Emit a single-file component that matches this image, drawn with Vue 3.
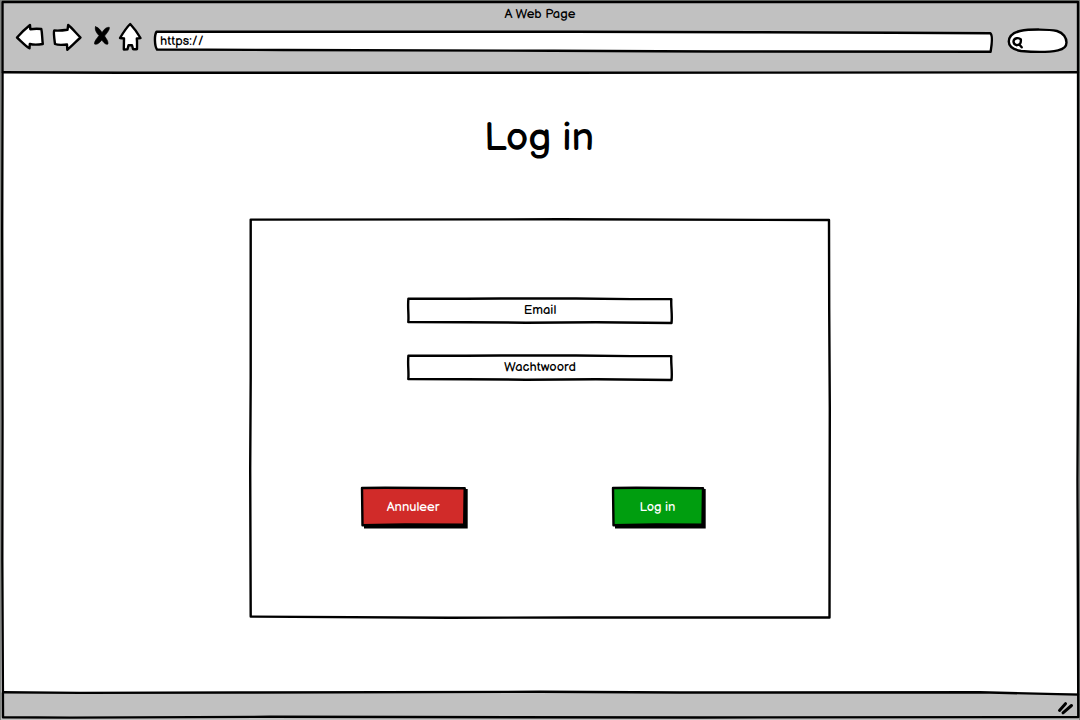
<script setup>
const fields = ['Email', 'Wachtwoord']
</script>

<template>
  <div class="browser">
    <header class="chrome">
      <div class="title"><span>A Web Page</span></div>
      <div class="toolbar">
        <nav class="nav">
          <svg width="142" height="34" viewBox="0 0 142 34" class="ink">
            <path d="M2 17.500C6 13 10 9 15 5L15.300 9.200C19 8.700 23 8.700 26.300 9C27.300 13 27 18 27.800 24C23 24.800 19 25 14.800 24L14.500 28.300C10 25.500 6 21 2 17.500Z" />
            <path d="M54.200 10.500C58 10.800 63 10.500 67.500 9.800L68.200 5C72 8 76 13 80.500 17.500C76 21.500 72 26 67.300 29.700L67 24.500C62 24.800 59 25.500 55 24C54.500 20 53.300 12 54.200 10.500Z" transform="translate(-15)" />
            <path class="solid" d="M80.500 6.800C83 7 85 9.500 87 12.500C89 9.500 91 7 94.300 7.300C95 9.500 92 13 89.600 16C91.300 19 93.500 21 93 24C91.200 25.300 88.500 22.500 86.800 20C84.500 23 82 25 79.500 24C79.200 21 82 18.500 84 15.500C82 13.500 79.300 10 80.500 6.800Z" />
            <path d="M115.200 4C119 8 122.500 13 125.500 18L121.800 18.500C122.300 22 122 25 122 29C120.500 29.500 119 29.300 118 29L117 25.300L113.500 25.300L112.500 29.300L108.800 29.500L109 18.500L105 18C108 13 111.500 7.500 115.200 4Z" />
          </svg>
        </nav>
        <div class="address">
          <svg class="sketch ink" viewBox="0 0 840 24">
            <path d="M3.500 3.700L420 3.700L600 4.200L740 4.800L837.300 5.300C839.600 7 839.400 13 837.600 23.700L560 23.500L400 22.800L130 22L4 21.500C1.500 18 1.200 7 3.500 3.700Z" />
          </svg>
          <span class="url">https://</span>
        </div>
        <div class="search">
          <svg width="64" height="30" viewBox="0 0 64 30" class="ink">
            <path d="M14 5C24 3 43 3.200 51 5C57.500 6.800 60.500 12 60.500 16.500C60.500 21 58 23 52 24.300C42 26.500 32 26.500 15 25C7 23.500 2.800 20 2.800 15.500C3 10 8 6.500 14 5Z" />
            <path class="bare" d="M7.500 15.500C7.800 11.500 13 11.500 14.800 13.300C15.300 17.500 13.500 19.200 10.500 19.200C8.500 18.500 7.500 17.500 7.500 15.500ZM13.500 18.800L15.700 21.300" />
          </svg>
        </div>
      </div>
    </header>

    <main class="page">
      <h1 class="heading">Log in</h1>
      <form class="panel" @submit.prevent>
        <svg class="sketch ink" viewBox="0 0 582 402">
          <path d="M1.700 1.600L310 1.300L580 2L580.200 90L580.800 190L580.500 399.500L330 399.500L200 399.700L1.700 398.600L1.200 250L1.700 160Z" />
        </svg>
        <div class="fields">
          <label v-for="label in fields" :key="label" class="field">
            <svg class="sketch ink" viewBox="0 0 268 28">
              <path d="M2.400 1.700L60 1.800L95 1.500L170 1.500L225 2.100L265.300 2.100C264.800 10 266.500 18 265.500 26L190 25.300L120 25.700L60 25.200L2.300 25C3 18 1.500 10 2.400 1.700Z" />
            </svg>
            <span>{{ label }}</span>
          </label>
        </div>
        <div class="actions">
          <button type="button" class="button cancel">
            <svg class="sketch" viewBox="0 0 108 43">
              <path class="shadow" d="M4 5L107.700 3L107.700 42.500L4 42.500Z" />
              <path class="face" d="M2 2L25 1.700L104.700 2.300L104.200 38.700L45 38.400L2.500 39.300Z" />
            </svg>
            <span>Annuleer</span>
          </button>
          <button type="submit" class="button login">
            <svg class="sketch" viewBox="0 0 95 43">
              <path class="shadow" d="M4 5L94.700 3L94.700 42.500L4 42.500Z" />
              <path class="face" d="M2 2L25 1.700L92 2.300L91.500 38.700L45 38.400L2.500 39.300Z" />
            </svg>
            <span>Log in</span>
          </button>
        </div>
      </form>
    </main>

    <footer class="status">
      <svg width="18" height="14" viewBox="0 0 18 14" class="grip">
        <path d="M2.500 9.500L8.500 2.700M6 11.800L14.500 4.500" />
      </svg>
    </footer>

    <svg class="frame ink" viewBox="0 0 1080 720">
      <path class="edge" d="M0 0H1080V1H0ZM0 0H1V720H0ZM1079 0H1080V720H1079Z" />
      <path class="bare" d="M2.500 2L500 2L1078 2L1078.200 300L1077.500 480L1078.300 717L700 717.500L400 717L270 716.800L70 717.600L3 717.300L2.300 560L2.500 420L2.200 230L2.500 90Z" />
      <path class="bare" d="M3 72.300L120 72.800L560 72.800L780 72.600L1078 72.300M3 692.300L80 692.900L240 692.500L540 691.800L680 692.500L980 692.300L1078 694.600" />
    </svg>
  </div>
</template>

<style scoped>
.browser {
  position: relative;
  display: flex;
  flex-direction: column;
  width: 1080px;
  height: 720px;
  overflow: hidden;
  background: #fff;
  color: #000;
  font-family: "Balsamiq Sans", Lato, "Open Sans", sans-serif;
  font-size: 13px;
}
svg { display: block; overflow: visible; }
.ink path {
  fill: #fff;
  stroke: #000;
  stroke-width: 2.4;
  stroke-linejoin: round;
  stroke-linecap: round;
}
.ink .bare { fill: none; }
.ink .solid { fill: #000; stroke-width: 0.6; }
.ink .edge { fill: #818481; stroke: none; }
.sketch { position: absolute; inset: 0; width: 100%; height: 100%; }
.frame { position: absolute; inset: 0; width: 1080px; height: 720px; pointer-events: none; }
.chrome { box-sizing: border-box; height: 73px; padding: 4px 9px 0 15px; background: #c1c1c1; }
.title { height: 16px; line-height: 21px; text-align: center; padding-right: 6px; }
.toolbar { display: flex; align-items: flex-start; }
.nav { flex: none; width: 138px; height: 34px; }
.address { flex: none; position: relative; width: 840px; height: 24px; margin-top: 8px; }
.address .url { position: relative; display: block; padding-left: 7px; line-height: 27px; }
.search { flex: none; margin: 6px 0 0 13px; }
.page { flex: 1; display: flex; flex-direction: column; align-items: center; }
.heading {
  margin: 38px 2px 0 0;
  height: 107px;
  line-height: 54px;
  font-size: 40px;
  font-weight: 400;
}
.panel {
  position: relative;
  box-sizing: border-box;
  width: 582px;
  height: 402px;
  padding-top: 79px;
  display: flex;
  flex-direction: column;
  align-items: center;
}
.fields { position: relative; display: flex; flex-direction: column; gap: 29px; }
.field { position: relative; display: block; width: 268px; height: 28px; line-height: 27px; text-align: center; }
.field span { position: relative; }
.actions { position: relative; display: flex; gap: 143px; margin: 104px 14px 0 0; }
.button { position: relative; height: 43px; border: 0; padding: 0 2px 2px 0; background: none; color: #fff; font: inherit; }
.button span { position: relative; }
.button .face { stroke: #000; stroke-width: 2.4; stroke-linejoin: round; }
.cancel { width: 108px; }
.cancel .face { fill: #d12b29; }
.login { width: 95px; }
.login .face { fill: #009e0f; }
.status { display: flex; align-items: center; justify-content: flex-end; box-sizing: border-box; height: 27px; padding: 2px 5px 0 0; background: #c1c1c1; }
.grip { fill: none; stroke: #000; stroke-width: 3; stroke-linecap: round; }
</style>

<style>
body { margin: 0; overflow: hidden; }
</style>
